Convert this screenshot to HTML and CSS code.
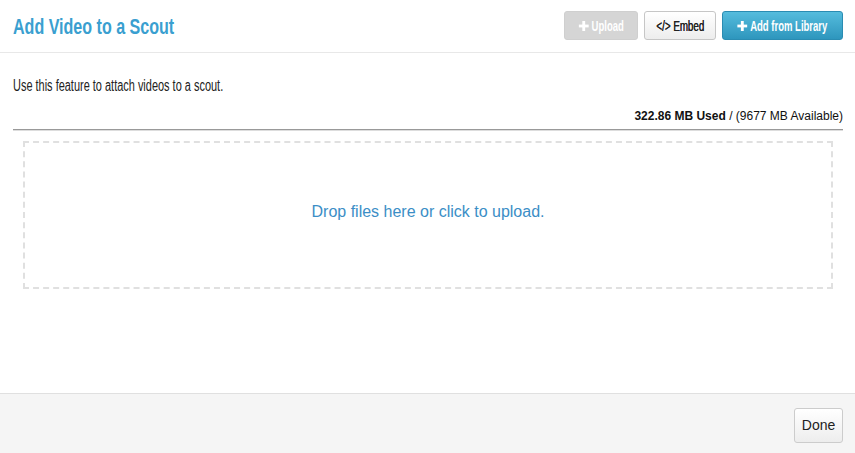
FILE: index.html
```html
<!DOCTYPE html>
<html>
<head>
<meta charset="utf-8">
<link rel="stylesheet" href="styles.css">
</head>
<body>
<div class="modal">
  <div class="header">
    <h1 class="title"><span class="cond">Add Video to a Scout</span></h1>
    <div class="actions">
      <button class="btn btn-disabled"><span class="cond"><svg class="plus" viewBox="0 0 15 10" preserveAspectRatio="none"><rect x="0" y="3.6" width="15" height="2.8" fill="currentColor"/><rect x="5.4" y="0" width="4.2" height="10" fill="currentColor"/></svg> Upload</span></button>
      <button class="btn btn-default"><span class="cond">&lt;/&gt; Embed</span></button>
      <button class="btn btn-primary"><span class="cond"><svg class="plus" viewBox="0 0 15 10" preserveAspectRatio="none"><rect x="0" y="3.6" width="15" height="2.8" fill="currentColor"/><rect x="5.4" y="0" width="4.2" height="10" fill="currentColor"/></svg> Add from Library</span></button>
    </div>
  </div>
  <div class="body">
    <p class="intro"><span class="cond">Use this feature to attach videos to a scout.</span></p>
    <div class="usage"><b>322.86 MB Used</b> / (9677 MB Available)</div>
    <div class="rule"></div>
    <div class="dropzone">Drop files here or click to upload.</div>
  </div>
  <div class="footer">
    <button class="done">Done</button>
  </div>
</div>
</body>
</html>
```
FILE: styles.css
```css
html, body { margin: 0; padding: 0; background: #fff; }
.modal { width: 855px; height: 453px; display: flex; flex-direction: column; font-family: "Liberation Sans", Arial, sans-serif; }
.cond { display: inline-block; white-space: nowrap; }
.header { height: 52px; border-bottom: 1px solid #e8e8e8; display: flex; align-items: center; justify-content: space-between; padding: 0 12px 0 13px; }
.title { margin: 0; font-weight: bold; font-size: 22px; color: #3a9fd0; line-height: 1; padding-top: 2px; }
.title .cond { transform: scaleX(0.73); transform-origin: left center; }
.actions { display: flex; gap: 6px; margin-top: -1px; }
.btn { height: 29px; border-radius: 3px; font-family: "Liberation Sans", Arial, sans-serif; font-weight: bold; font-size: 14px; padding: 0; display: flex; align-items: center; justify-content: center; box-sizing: border-box; overflow: visible; }
.btn .cond { transform: scaleX(0.68); transform-origin: center; display: inline-flex; align-items: center; gap: 4px; }
.plus { width: 15px; height: 10px; display: block; }
.btn-disabled { width: 74px; background: #d5d5d5; color: #fff; border: 1px solid #cfcfcf; }
.btn-default { width: 72px; background: linear-gradient(#fff, #ededed); color: #222; border: 1px solid #c6c6c6; font-weight: normal; }
.btn-default .cond { transform: scaleX(0.7); text-shadow: 0.3px 0 0 #222; }
.btn-primary { width: 121px; background: linear-gradient(#55bcdd, #2e96bd); color: #fff; border: 1px solid #2a8cb2; }
.body { flex: 1; padding: 0 12px 0 13px; }
.intro { margin: 23px 0 0; font-size: 16px; line-height: 19px; color: #222; }
.intro .cond { transform: scaleX(0.685); transform-origin: left center; }
.usage { margin-top: 14px; text-align: right; font-size: 12px; color: #111; }
.usage b { font-weight: bold; }
.rule { margin-top: 6px; height: 1px; background: #999; border-bottom: 1px solid #ddd; }
.dropzone { margin: 10px 10px 0 10px; height: 138px; border: 2px dashed #e0e0e0; display: flex; align-items: center; justify-content: center; font-size: 16px; color: #3b8ec6; padding-bottom: 6px; }
.footer { height: 59px; background: #f5f5f5; border-top: 1px solid #e0e0e0; display: flex; justify-content: flex-end; align-items: center; padding-right: 12px; }
.done { width: 49px; height: 35px; background: linear-gradient(#fff, #ededed); border: 1px solid #ccc; border-radius: 3px; font-family: "Liberation Sans", Arial, sans-serif; font-size: 14px; color: #222; margin-top: 3px; }
```
